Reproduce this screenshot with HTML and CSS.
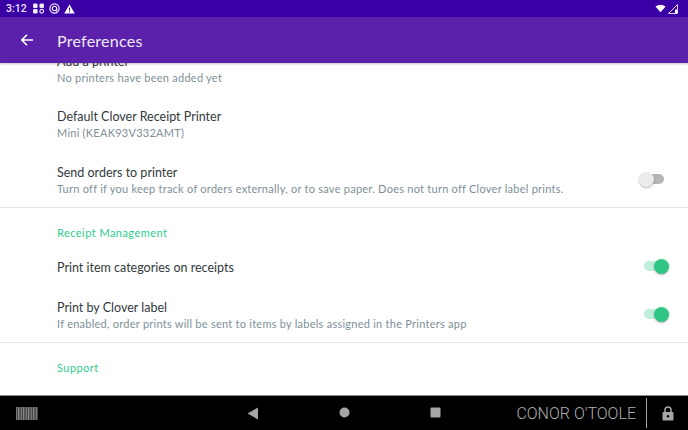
FILE: index.html
```html
<!DOCTYPE html>
<html lang="en">
<head>
    <meta charset="UTF-8">
    <title>Preferences</title>
    <link rel="stylesheet" href="styles.css">
</head>
<body>

<div id="screen">

    <!-- Status bar -->
    <div class="status-bar">
        <span class="clock">3:12</span>
        <svg class="status-icon" viewBox="0 0 14 12" width="13" height="11">
            <rect x="1" y="0.5" width="5" height="5" rx="1.5" fill="#f1ecfa"/>
            <rect x="8" y="0.5" width="5" height="5" rx="1.5" fill="#f1ecfa"/>
            <rect x="1" y="6.5" width="5" height="5" rx="1.5" fill="#f1ecfa"/>
            <circle cx="10.5" cy="9" r="2" fill="none" stroke="#f1ecfa" stroke-width="1.2"/>
        </svg>
        <svg class="status-icon" viewBox="0 0 12 12" width="11" height="11">
            <circle cx="6" cy="6" r="5" fill="none" stroke="#f1ecfa" stroke-width="1.3"/>
            <circle cx="6" cy="6" r="2.4" fill="none" stroke="#f1ecfa" stroke-width="1.2"/>
            <path d="M8.4 6v3.6" stroke="#f1ecfa" stroke-width="1.2"/>
        </svg>
        <svg class="status-icon" viewBox="0 0 12 11" width="11" height="10">
            <path d="M6 0.5 11.8 10.5H0.2Z" fill="#fff"/>
            <path d="M6 4v3.2M6 8v1.2" stroke="#3a00a6" stroke-width="1.1"/>
        </svg>
        <div class="status-right">
            <svg viewBox="0 0 13 10" width="11" height="9">
                <path d="M0.5 2.5Q6.5 -1.5 12.5 2.5L6.5 9.5Z" fill="#fff"/>
            </svg>
            <svg viewBox="0 0 10 10" width="10" height="10">
                <path d="M9.5 0.5V9.5H0.5Z" fill="none" stroke="#e4dbf5" stroke-width="1"/>
                <path d="M7 5.5h2v3.5H7z" fill="#fff"/>
            </svg>
        </div>
    </div>

    <!-- App bar -->
    <div class="app-bar">
        <svg class="back-arrow" viewBox="0 0 14 14" width="14" height="14">
            <path d="M13 7H2M7 1.8 1.8 7 7 12.2" fill="none" stroke="#fff" stroke-width="1.6"/>
        </svg>
        <h1>Preferences</h1>
    </div>

    <!-- Settings list -->
    <div class="content">
        <div class="list">
            <div class="row row-first">
                <div class="row-text">
                    <div class="row-title">Add a printer</div>
                    <div class="row-sub">No printers have been added yet</div>
                </div>
            </div>
            <div class="row row-default">
                <div class="row-text">
                    <div class="row-title">Default Clover Receipt Printer</div>
                    <div class="row-sub">Mini (KEAK93V332AMT)</div>
                </div>
            </div>
            <div class="row row-send">
                <div class="row-text">
                    <div class="row-title">Send orders to printer</div>
                    <div class="row-sub">Turn off if you keep track of orders externally, or to save paper. Does not turn off Clover label prints.</div>
                </div>
                <div class="switch"><span class="knob"></span></div>
            </div>

            <div class="section">
                <div class="section-title">Receipt Management</div>
                <div class="row row-single">
                    <div class="row-text">
                        <div class="row-title">Print item categories on receipts</div>
                    </div>
                    <div class="switch on"><span class="knob"></span></div>
                </div>
                <div class="row row-label">
                    <div class="row-text">
                        <div class="row-title">Print by Clover label</div>
                        <div class="row-sub">If enabled, order prints will be sent to items by labels assigned in the Printers app</div>
                    </div>
                    <div class="switch on"><span class="knob"></span></div>
                </div>
            </div>

            <div class="section">
                <div class="section-title">Support</div>
            </div>
        </div>
    </div>

    <!-- Bottom navigation -->
    <div class="nav-bar">
        <div class="barcode"></div>
        <div class="nav-buttons">
            <svg viewBox="0 0 12 13" width="12" height="13"><path d="M11 0.5V12.5L0.5 6.5Z" fill="#a6a6a6"/></svg>
            <svg viewBox="0 0 11 11" width="11" height="11"><circle cx="5.5" cy="5.5" r="5" fill="#a6a6a6"/></svg>
            <svg viewBox="0 0 11 11" width="11" height="11"><rect x="0.5" y="0.5" width="10" height="10" rx="1" fill="#a6a6a6"/></svg>
        </div>
        <div class="employee">CONOR O'TOOLE</div>
        <div class="lock">
            <svg viewBox="0 0 12 15" width="12" height="15">
                <path d="M3 6V4a3 3 0 0 1 6 0v2" fill="none" stroke="#a6a6a6" stroke-width="1.5"/>
                <rect x="0.5" y="6" width="11" height="8.5" rx="1" fill="#a6a6a6"/>
                <circle cx="6" cy="10.2" r="1.2" fill="#000"/>
            </svg>
        </div>
    </div>

</div>

</body>
</html>
```

FILE: styles.css
```css
/* General */
html, body {
    margin: 0;
    padding: 0;
}

body {
    font-family: Lato, "Noto Sans", sans-serif;
    background-color: #fff;
}

#screen {
    width: 688px;
    height: 430px;
    display: flex;
    flex-direction: column;
    overflow: hidden;
}

/* Status bar */
.status-bar {
    height: 17px;
    flex: none;
    display: flex;
    align-items: center;
    padding: 0 6px;
    background-color: #3a00a6;
    color: #efe9f8;
}

.clock {
    font-family: Roboto, sans-serif;
    font-size: 10.5px;
    font-weight: 500;
    width: 26px;
}

.status-icon {
    margin-right: 4px;
}

.status-right {
    margin-left: auto;
    display: flex;
    align-items: center;
    gap: 2px;
    padding-right: 4px;
}

/* App bar */
.app-bar {
    height: 46px;
    flex: none;
    display: flex;
    align-items: center;
    background-color: #5b21ab;
    color: #efe9f8;
    box-shadow: 0 1px 2px rgba(0, 0, 0, 0.25);
    position: relative;
    z-index: 1;
}

.back-arrow {
    margin-left: 20px;
    margin-right: 23px;
}

.app-bar h1 {
    margin: 0;
    font-size: 16px;
    font-weight: 400;
    letter-spacing: 0.25px;
}

/* List */
.content {
    flex: 1;
    overflow: hidden;
}

.list {
    margin-top: -22px;
}

.row {
    display: flex;
    align-items: center;
    padding: 0 20px 0 57px;
}

.row-text {
    flex: 1;
}

.row-title {
    font-size: 12.5px;
    line-height: 17px;
    color: #333a3d;
}

.row-sub {
    font-size: 11px;
    line-height: 15px;
    color: #7d9098;
    letter-spacing: 0.25px;
}

.row-first {
    height: 55px;
}

.row-default {
    height: 56px;
}

.row-send {
    height: 54px;
    padding-top: 1px;
    border-bottom: 1px solid #e8e8e8;
}

.section {
    border-bottom: 1px solid #e8e8e8;
}

.section:last-child {
    border-bottom: none;
}

.section-title {
    font-size: 11px;
    line-height: 15px;
    color: #2ecc8b;
    letter-spacing: 0.45px;
    padding: 17px 0 6px 57px;
}

.row-single {
    height: 42px;
}

.row-label {
    height: 54px;
}

/* Switches */
.switch {
    width: 24px;
    height: 10px;
    margin-bottom: 2px;
    margin-right: 4px;
    border-radius: 5px;
    background-color: #b5b5b5;
    display: flex;
    align-items: center;
    justify-content: flex-start;
}

.switch .knob {
    width: 15px;
    height: 15px;
    border-radius: 50%;
    background-color: #ececec;
    box-shadow: 0 1px 2px rgba(0, 0, 0, 0.3);
    margin-left: -1px;
}

.switch.on {
    margin-right: 0;
    background-color: #bdeeda;
    justify-content: flex-end;
}

.switch.on .knob {
    background-color: #2fc584;
    margin-left: 0;
    margin-right: -1px;
}

/* Bottom navigation */
.nav-bar {
    height: 35px;
    flex: none;
    display: flex;
    align-items: center;
    background-color: #000;
    border-top: 1px solid #8a8a8a;
    box-sizing: border-box;
    color: #a6a6a6;
}

.barcode {
    width: 22px;
    height: 13px;
    margin-left: 16px;
    background-image: repeating-linear-gradient(90deg, #777 0 1px, #444 1px 2px, #888 2px 3px, #555 3px 5px);
}

.nav-buttons {
    width: 194px;
    margin-left: 209px;
    display: flex;
    justify-content: space-between;
}

.employee {
    margin-left: auto;
    font-family: Roboto, sans-serif;
    font-size: 16px;
    font-weight: 300;
    color: #b0b0b0;
    padding-right: 10px;
}

.lock {
    height: 30px;
    width: 42px;
    box-sizing: border-box;
    border-left: 1px solid #a6a6a6;
    display: flex;
    align-items: center;
    justify-content: center;
}
```
